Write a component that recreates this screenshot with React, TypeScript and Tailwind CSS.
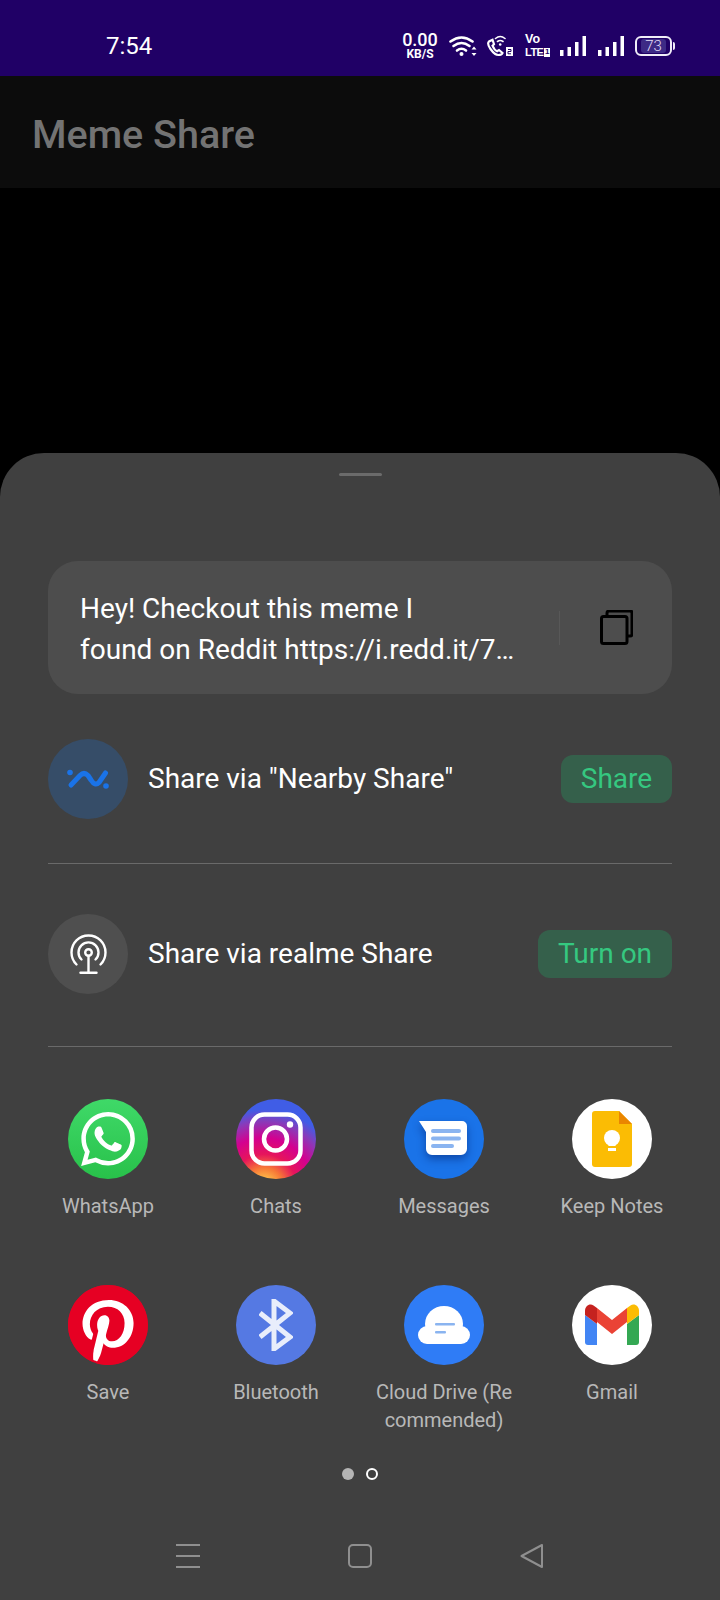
import React from 'react';
import { SiWhatsapp, SiPinterest } from 'react-icons/si';

const Signal = ({ className }: { className?: string }) => (
  <svg className={className} width="26" height="20" viewBox="0 0 26 20" fill="white">
    <rect x="0" y="14" width="3.500" height="6" />
    <rect x="7.500" y="11" width="3.500" height="9" />
    <rect x="15" y="6" width="3.500" height="14" />
    <rect x="22.500" y="0" width="3.500" height="20" />
  </svg>
);

const StatusIcons = () => (
  <div className="ml-auto flex items-center text-white">
    <div className="flex w-[36px] flex-col items-center font-medium">
      <span className="text-[18px] leading-[16px]">0.00</span>
      <span className="text-[12px] font-bold leading-[12px]">KB/S</span>
    </div>
    <svg className="ml-[11px]" width="28" height="22" viewBox="0 0 28 22" fill="none" stroke="white" strokeWidth="2.600" strokeLinecap="round">
      <path d="M1.500 6.500Q12.500 -1.500 23.500 6.500" />
      <path d="M4.500 11Q12.500 5 20.500 11" />
      <path d="M8 15.500Q12.500 12 17 15.500" />
      <circle cx="12.500" cy="19" r="2" fill="white" stroke="none" />
      <path d="M25 11.500l2.500 3h-5zM25 21l2.500-3h-5z" fill="white" stroke="none" />
    </svg>
    <svg className="ml-[9px]" width="28" height="22" viewBox="0 0 28 22" fill="none" stroke="white" strokeWidth="2.200" strokeLinecap="round">
      <path d="M3 6.500c-1.500 1.500-1 4 1.500 7.500s5.500 6 8 6c2 0 3.500-1 4-2l-3.500-3-2 1.200c-1.500-.5-3.500-3-4.500-5.500l1.500-1.500-1.500-4.500z" />
      <path d="M9.500 3.500c3-2.500 6.500-2.500 9.500 0M11.500 6.500c2-1.500 3.500-1.500 5.500 0" strokeWidth="1.600" />
      <circle cx="14.200" cy="9.500" r="1.300" fill="white" stroke="none" />
      <rect x="20" y="12" width="7" height="9" fill="white" stroke="none" />
      <path d="M22 14.500h3v2h-3v2.300h3" stroke="#200066" strokeWidth="1" strokeLinecap="butt" />
    </svg>
    <div className="ml-[11px] flex w-[25px] flex-col pb-[2px] font-['Liberation_Sans',sans-serif] font-bold">
      <span className="text-[12.500px] leading-[14.500px]">Vo</span>
      <span className="flex items-center text-[11px] leading-[12.500px] tracking-[-0.5px]">
        LTE
        <span className="ml-[1px] flex h-[9px] w-[6px] items-center justify-center bg-white text-[8px] tracking-normal text-[#200066]">1</span>
      </span>
    </div>
    <Signal className="ml-[10px]" />
    <Signal className="ml-[12px]" />
    <div className="ml-[11px] flex h-[20px] w-[37px] items-center justify-center rounded-[6px] border-2 border-[#f0edf8]">
      <div className="flex h-[14px] w-[25px] items-center justify-center rounded-[3px] bg-[#3d2a85] text-[15px] font-light leading-none text-[#e4dff5]">73</div>
    </div>
    <div className="ml-[1px] h-[8px] w-[2px] rounded-r-sm bg-[#f0edf8]" />
  </div>
);

const NearbyIcon = () => (
  <svg width="42" height="24" viewBox="0 0 42 24" fill="none" stroke="#1a73e8" strokeWidth="5" strokeLinecap="round" strokeLinejoin="round">
    <path d="M4 18L13 8.500Q17 4.500 21 8.500L24 13Q28 19.500 32 15.500L38.500 6" />
    <circle cx="3" cy="5.500" r="2.800" fill="#1a73e8" stroke="none" />
    <circle cx="39" cy="19" r="2.800" fill="#1a73e8" stroke="none" />
  </svg>
);

const RealmeIcon = () => (
  <svg width="37" height="40" viewBox="0 0 37 40" fill="none" stroke="white" strokeWidth="2.400" strokeLinecap="round">
    <path d="M6.500 30.500A17 17 0 1 1 30.500 30.500" />
    <path d="M11.500 25.500A10 10 0 1 1 25.500 25.500" />
    <circle cx="18.500" cy="18.500" r="3.300" />
    <path d="M18.500 22V38" />
    <path d="M10.500 38.800H26.500" />
  </svg>
);

const InstagramIcon = () => (
  <div className="flex h-[80px] w-[80px] items-center justify-center rounded-full bg-[radial-gradient(circle_at_35%_110%,#ffdc80_0%,#fcaf45_10%,#f77737_19%,#e6155b_32%,#d4008f_48%,#8a3ab9_64%,#405de6_76%)]">
    <svg width="54" height="54" viewBox="0 0 54 54" fill="none" stroke="white">
      <rect x="2.500" y="2.500" width="49" height="49" rx="13" strokeWidth="4.500" />
      <circle cx="26.500" cy="27" r="11.500" strokeWidth="4.500" />
      <circle cx="41" cy="12.500" r="3.200" fill="white" stroke="none" />
    </svg>
  </div>
);

const MessagesIcon = () => (
  <div className="flex h-[80px] w-[80px] items-center justify-center rounded-full bg-[#1a73e8] pr-[3px]">
    <svg className="drop-shadow-[0_4px_4px_rgba(0,20,90,0.45)]" width="48" height="36" viewBox="0 0 48 36">
      <path d="M0 0H43a5 5 0 0 1 5 5V28a6 6 0 0 1-6 6H13a6 6 0 0 1-6-6V11z" fill="white" />
      <rect x="12" y="8" width="30" height="4" rx="2" fill="#8ab4f0" />
      <rect x="12" y="15.500" width="30" height="4" rx="2" fill="#8ab4f0" />
      <rect x="12" y="23" width="23" height="4" rx="2" fill="#8ab4f0" />
    </svg>
  </div>
);

const KeepIcon = () => (
  <div className="flex h-[80px] w-[80px] items-center justify-center rounded-full bg-white">
    <svg width="40" height="56" viewBox="0 0 40 56">
      <path d="M3 0H27L40 13V53a3 3 0 0 1-3 3H3a3 3 0 0 1-3-3V3a3 3 0 0 1 3-3z" fill="#fbbc04" />
      <path d="M27 0L40 13H27z" fill="#ea8600" />
      <circle cx="20" cy="27" r="8" fill="white" />
      <rect x="16.500" y="30" width="7" height="5" fill="white" />
      <rect x="16" y="37" width="8" height="3" fill="white" />
    </svg>
  </div>
);

const PinterestIcon = () => (
  <div className="h-[80px] w-[80px] rounded-full bg-[radial-gradient(circle,white_66%,#e60023_68%)] text-[#e60023]">
    <SiPinterest size={80} />
  </div>
);

const BluetoothIcon = () => (
  <div className="flex h-[80px] w-[80px] items-center justify-center rounded-full bg-[#5579e3]">
    <svg width="34" height="52" viewBox="0 0 34 52" fill="none" stroke="#e8edfb" strokeWidth="5">
      <path d="M1 14L31 38L15 50V2L31 14L1 38" />
    </svg>
  </div>
);

const CloudIcon = () => (
  <div className="flex h-[80px] w-[80px] items-center justify-center rounded-full bg-[#2f7cf6]">
    <svg width="52" height="38" viewBox="0 0 52 38">
      <rect x="0" y="20" width="52" height="18" rx="9" fill="white" />
      <ellipse cx="26" cy="18" rx="19" ry="18" fill="white" />
      <rect x="17" y="17" width="20" height="2.500" rx="1" fill="#8ab4f0" />
      <rect x="17" y="25" width="11" height="2.500" rx="1" fill="#8ab4f0" />
    </svg>
  </div>
);

const GmailIcon = () => (
  <div className="flex h-[80px] w-[80px] items-center justify-center rounded-full bg-white">
    <svg width="54" height="42" viewBox="0 0 54 42">
      <path d="M0 11V38a3 3 0 0 0 3 3H12V20z" fill="#4285f4" />
      <path d="M42 20V41H51a3 3 0 0 0 3-3V11z" fill="#34a853" />
      <path d="M12 4L27 16L42 4V18L27 30L12 18z" fill="#ea4335" />
      <path d="M0 7V11L12 20V4L8.500 1.500C5 -1 0 1.500 0 7z" fill="#c5221f" />
      <path d="M54 7V11L42 20V4L45.500 1.500C49 -1 54 1.500 54 7z" fill="#fbbc04" />
    </svg>
  </div>
);

const apps = [
  { name: 'WhatsApp', icon: <div className="flex h-[80px] w-[80px] items-center justify-center rounded-full bg-gradient-to-b from-[#3fd968] to-[#28c14a] text-white"><SiWhatsapp size={54} /></div> },
  { name: 'Chats', icon: <InstagramIcon /> },
  { name: 'Messages', icon: <MessagesIcon /> },
  { name: 'Keep Notes', icon: <KeepIcon /> },
  { name: 'Save', icon: <PinterestIcon /> },
  { name: 'Bluetooth', icon: <BluetoothIcon /> },
  { name: 'Cloud Drive (Re commended)', icon: <CloudIcon /> },
  { name: 'Gmail', icon: <GmailIcon /> },
];

const App: React.FC = () => {
  return (
    <div className="flex h-[1600px] w-[720px] flex-col overflow-hidden bg-black font-['Roboto',sans-serif]">
      {/* status bar */}
      <div className="flex h-[76px] shrink-0 items-center bg-[#200066] pl-[106px] pr-[45px] pt-[16px]">
        <span className="text-[24px] text-white">7:54</span>
        <StatusIcons />
      </div>

      {/* app bar */}
      <div className="flex h-[112px] shrink-0 items-center bg-[#0c0c0c] pl-[32px] pt-[5px]">
        <h1 className="text-[39.500px] font-medium text-[#737373]">Meme Share</h1>
      </div>

      <div className="h-[265px] shrink-0" />

      {/* share sheet */}
      <div className="flex flex-1 flex-col rounded-t-[44px] bg-[#404040]">
        <div className="mx-auto mt-[20px] h-[3px] w-[43px] rounded-full bg-[#6b6b6b]" />

        <div className="mx-[48px] mt-[85px] flex h-[133px] items-center rounded-[30px] bg-[#4d4d4d] pl-[32px]">
          <p className="w-[450px] pt-[2px] text-[28px] leading-[41px] text-white">
            Hey! Checkout this meme I<br />found on Reddit https://i.redd.it/7…
          </p>
          <div className="ml-[29px] h-[34px] w-px bg-[#585858]" />
          <svg className="ml-[40px]" width="33" height="35" viewBox="0 0 33 35" fill="none" stroke="black" strokeWidth="3" strokeLinejoin="round">
            <path d="M7 6.500V3a2 2 0 0 1 2-2H30a2 2 0 0 1 2 2V24a2 2 0 0 1-2 2H27" />
            <rect x="1.500" y="6.500" width="25.500" height="27" rx="2" />
          </svg>
        </div>

        <div className="mx-[48px] mt-[45px] flex items-center">
          <div className="flex h-[80px] w-[80px] items-center justify-center rounded-full bg-[#364d68]">
            <NearbyIcon />
          </div>
          <span className="ml-[20px] text-[28px] text-white">Share via "Nearby Share"</span>
          <button className="ml-auto flex h-[48px] w-[111px] items-center justify-center rounded-[12px] bg-[#35604b] text-[28px] text-[#35c880]">Share</button>
        </div>

        <div className="mx-[48px] mt-[44px] h-px bg-[#6a6a6a]" />

        <div className="mx-[48px] mt-[50px] flex items-center">
          <div className="flex h-[80px] w-[80px] items-center justify-center rounded-full bg-[#4f4f4f]">
            <RealmeIcon />
          </div>
          <span className="ml-[20px] text-[28px] text-white">Share via realme Share</span>
          <button className="ml-auto flex h-[48px] w-[134px] items-center justify-center rounded-[12px] bg-[#35604b] text-[28px] text-[#35c880]">Turn on</button>
        </div>

        <div className="mx-[48px] mt-[52px] h-px bg-[#6a6a6a]" />

        {/* app grid */}
        <div className="mt-[52px] grid grid-cols-4 gap-y-[25px] px-[24px]">
          {apps.map(app => (
            <div key={app.name} className="flex h-[161px] flex-col items-center">
              {app.icon}
              <span className="mt-[13px] w-[140px] text-center text-[20px] leading-[28px] text-[#b8b8b8]">{app.name === 'Cloud Drive (Re commended)' ? <>Cloud Drive (Re<br />commended)</> : app.name}</span>
            </div>
          ))}
        </div>

        <div className="mt-[22px] flex justify-center gap-[12px]">
          <div className="h-[12px] w-[12px] rounded-full bg-[#b5b5b5]" />
          <div className="h-[12px] w-[12px] rounded-full border-2 border-white" />
        </div>

        {/* nav bar */}
        <div className="mt-[64px] flex items-center justify-between pl-[176px] pr-[177px]">
          <div className="flex h-[24px] w-[24px] flex-col justify-between">
            <div className="h-[2px] bg-[#8f8f8f]" />
            <div className="h-[2px] bg-[#8f8f8f]" />
            <div className="h-[2px] bg-[#8f8f8f]" />
          </div>
          <div className="h-[24px] w-[24px] rounded-[5px] border-2 border-[#8f8f8f]" />
          <svg width="23" height="24" viewBox="0 0 23 24" fill="none" stroke="#8f8f8f" strokeWidth="2" strokeLinejoin="round">
            <path d="M1.500 12L22 1V23z" />
          </svg>
        </div>
      </div>
    </div>
  );
};

export default App;
